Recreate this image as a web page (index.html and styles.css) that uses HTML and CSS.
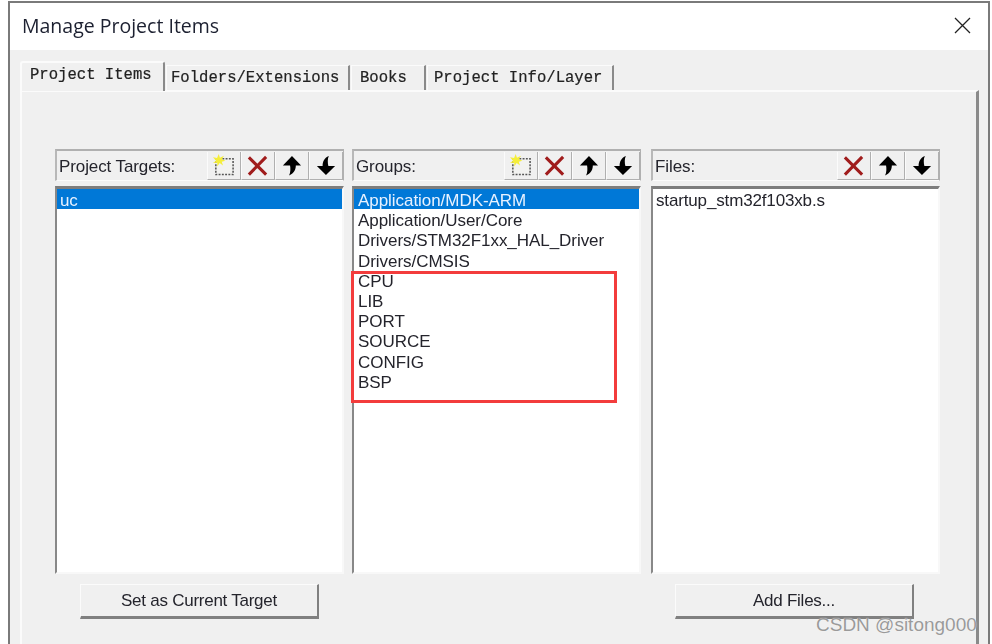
FILE: index.html
```html
<!DOCTYPE html>
<html lang="en">
<head>
<meta charset="utf-8">
<title>Manage Project Items</title>
<link rel="stylesheet" href="styles.css">
</head>
<body>
<svg class="defs" width="0" height="0" aria-hidden="true">
  <symbol id="i-new" viewBox="0 0 24 24">
    <rect x="4" y="5" width="18" height="16.500" fill="#f2f2f0" stroke="#555" stroke-width="1.600" stroke-dasharray="2 1.400"/>
    <path d="M7 0L8.300 4 12.500 1.800 10.300 5.500 14 7 10.200 8 11.500 12 8 9.500 5.500 13 5.500 9 1 9.500 4.200 7 1 3.500 5.300 4.300z" fill="#f5ee3a"/>
  </symbol>
  <symbol id="i-del" viewBox="0 0 24 24">
    <path d="M3 3.500L21 21.500M21 3L3 21.500" fill="none" stroke="#a01c1c" stroke-width="3.200"/>
  </symbol>
  <symbol id="i-up" viewBox="0 0 24 24">
    <path d="M12.500 2L22 12H16.500C16.500 16 15 20 9.500 22.500C11.200 19 11 15 10.500 12H3z" fill="#000"/>
  </symbol>
  <symbol id="i-down" viewBox="0 0 24 24">
    <path d="M12.500 22L3 12.500H9C9 8 10.500 4 15.500 2C14 5 14.200 9 15 12.500H22z" fill="#000"/>
  </symbol>
</svg>

<div class="window">
  <header class="titlebar">
    <h1 class="title">Manage Project Items</h1>
    <svg class="close" width="17" height="17" viewBox="0 0 17 17"><path d="M1 1L16 16M16 1L1 16" fill="none" stroke="#222" stroke-width="1.300"/></svg>
  </header>

  <div class="content">
    <nav class="tabs">
      <span class="tab tab-active">Project Items</span>
      <span class="tab tab-folders">Folders/Extensions</span>
      <span class="tab tab-books">Books</span>
      <span class="tab tab-info">Project Info/Layer</span>
    </nav>

    <section class="panel">
      <div class="columns">
        <div class="column">
          <div class="head">
            <span class="head-label">Project Targets:</span>
            <span class="tool"><svg class="ic"><use href="#i-new"/></svg></span>
            <span class="tool"><svg class="ic"><use href="#i-del"/></svg></span>
            <span class="tool"><svg class="ic"><use href="#i-up"/></svg></span>
            <span class="tool"><svg class="ic"><use href="#i-down"/></svg></span>
          </div>
          <ul class="list">
            <li class="row row-selected">uc</li>
          </ul>
          <div class="action"><span class="btn">Set as Current Target</span></div>
        </div>

        <div class="column">
          <div class="head">
            <span class="head-label">Groups:</span>
            <span class="tool"><svg class="ic"><use href="#i-new"/></svg></span>
            <span class="tool"><svg class="ic"><use href="#i-del"/></svg></span>
            <span class="tool"><svg class="ic"><use href="#i-up"/></svg></span>
            <span class="tool"><svg class="ic"><use href="#i-down"/></svg></span>
          </div>
          <ul class="list list-groups">
            <li class="row row-selected">Application/MDK-ARM</li>
            <li class="row">Application/User/Core</li>
            <li class="row">Drivers/STM32F1xx_HAL_Driver</li>
            <li class="row">Drivers/CMSIS</li>
            <li class="row">CPU</li>
            <li class="row">LIB</li>
            <li class="row">PORT</li>
            <li class="row">SOURCE</li>
            <li class="row">CONFIG</li>
            <li class="row">BSP</li>
          </ul>
          <div class="highlight"></div>
        </div>

        <div class="column column-files">
          <div class="head">
            <span class="head-label">Files:</span>
            <span class="tool"><svg class="ic"><use href="#i-del"/></svg></span>
            <span class="tool"><svg class="ic"><use href="#i-up"/></svg></span>
            <span class="tool"><svg class="ic"><use href="#i-down"/></svg></span>
          </div>
          <ul class="list">
            <li class="row">startup_stm32f103xb.s</li>
          </ul>
          <div class="action"><span class="btn">Add Files...</span></div>
        </div>
      </div>
    </section>
  </div>
</div>

<div class="watermark">CSDN @sitong000</div>
</body>
</html>
```
FILE: styles.css
```css
* { box-sizing: border-box; }
html, body { height: 100%; }
body {
  margin: 0;
  background: #fff;
  overflow: hidden;
  position: relative;
  font-family: "Liberation Sans", Arial, sans-serif;
  color: #24242c;
}
.defs { position: absolute; }

.window {
  margin: 1px 2px 0 8px;
  height: 660px;
  border: 2px solid #7a7a7a;
  background: #f0f0f0;
  overflow: hidden;
  filter: blur(0.4px);
}
.titlebar {
  height: 47px;
  background: #fff;
  display: flex;
  align-items: center;
  justify-content: space-between;
  padding: 0 17px 2px 12px;
}
.title {
  margin: 0;
  font-family: "Open Sans", "Noto Sans", sans-serif;
  font-weight: 400;
  font-size: 19.500px;
  color: #1c2030;
}

.content { padding: 10px 9px 0 10px; }

.tabs {
  display: flex;
  align-items: flex-end;
  height: 30px;
  font-family: "Liberation Mono", monospace;
  font-size: 15.600px;
  color: #222;
  -webkit-text-stroke: 0.2px #222;
}
.tab {
  height: 25px;
  background: #f0f0f0;
  border-top: 1px solid #fbfbfb;
  border-left: 1px solid #fbfbfb;
  border-right: 2px solid #8a8a8a;
  padding: 0 0 0 4px;
  display: flex;
  align-items: center;
  margin-right: 1px;
}
.tab-active {
  height: 30px;
  width: 145px;
  padding: 0 0 4px 8px;
  position: relative;
  z-index: 1;
  margin-bottom: -1px;
  border-top: 2px solid #fbfbfb;
  border-left: 2px solid #fbfbfb;
  border-radius: 3px 3px 0 0;
}
.tab-folders { width: 184px; }
.tab-books { width: 75px; padding-left: 8px; }
.tab-info { width: 187px; padding-left: 6px; }

.panel {
  height: 560px;
  border-top: 2px solid #fbfbfb;
  border-left: 2px solid #fbfbfb;
  border-right: 3px solid #8a8a8a;
  padding: 57px 0 0 33px;
}
.columns { display: flex; gap: 8px; }
.column { width: 289px; position: relative; }
.column-files { margin-left: 2px; }

.head {
  height: 32px;
  display: flex;
  align-items: stretch;
  padding: 1px 0 0 2px;
  border-top: 2px solid #b0b0b0;
  border-left: 2px solid #b8b8b8;
  border-right: 1px solid #b0b0b0;
  border-bottom: 1px solid #fbfbfb;
  font-size: 17px;
  letter-spacing: -0.100px;
}
.head-label { flex: 1; align-self: center; padding-top: 2px; }
.tool {
  width: 34px;
  display: flex;
  align-items: center;
  justify-content: center;
  padding-right: 2px;
  border-left: 1px solid #fbfbfb;
  border-right: 1px solid #b0b0b0;
  border-bottom: 1px solid #b0b0b0;
}
.ic { width: 23px; height: 23px; }

.list {
  list-style: none;
  margin: 5px 0 0;
  padding: 0;
  height: 388px;
  background: #fff;
  border-top: 3px solid #7d7d7d;
  border-left: 2px solid #888;
  border-right: 2px solid #f8f8f8;
  border-bottom: 2px solid #f8f8f8;
  font-size: 17px;
  letter-spacing: -0.150px;
}
.list-groups { letter-spacing: -0.050px; }
.list-groups .row { padding-left: 4px; }
.row {
  height: 20.200px;
  line-height: 24px;
  padding-left: 3px;
  white-space: nowrap;
}
.row-selected { background: #0078d7; color: #e8f2ff; }

.highlight {
  position: absolute;
  left: -1px;
  top: 122px;
  width: 266px;
  height: 132px;
  border: 3px solid #f33c3c;
}

.action { padding: 10px 0 0 25px; }
.column-files .action { padding-left: 24px; }
.btn {
  width: 239px;
  height: 35px;
  display: flex;
  align-items: center;
  justify-content: center;
  padding-top: 1px;
  background: #f0f0f0;
  border-top: 1px solid #fbfbfb;
  border-left: 1px solid #fbfbfb;
  border-right: 2px solid #808080;
  border-bottom: 3px solid #808080;
  font-size: 17px;
  letter-spacing: -0.250px;
}

.watermark {
  position: absolute;
  left: 816px;
  top: 614px;
  font-size: 19px;
  color: #9a9a9a;
  text-shadow: 0 0 1px #fff;
}
```
